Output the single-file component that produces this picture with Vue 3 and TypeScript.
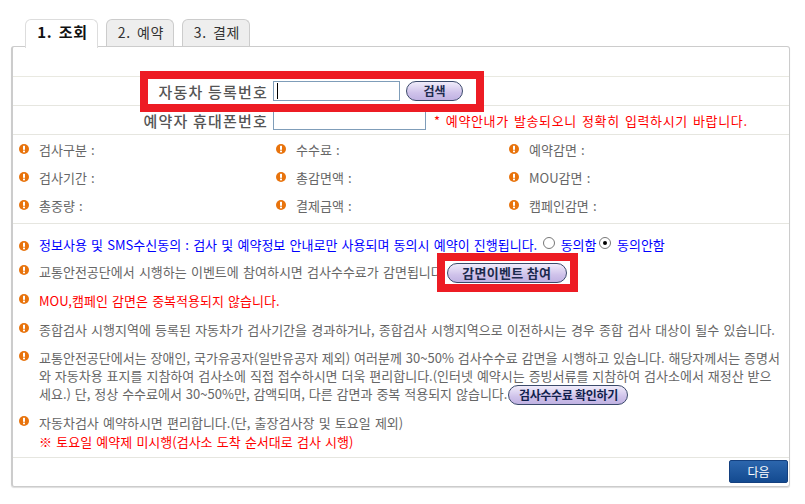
<script setup lang="ts">
interface Field {
  label: string;
}

const tabs = ['1. 조회', '2. 예약', '3. 결제']

const fields: Field[] = [
  { label: '검사구분 :' },
  { label: '수수료 :' },
  { label: '예약감면 :' },
  { label: '검사기간 :' },
  { label: '총감면액 :' },
  { label: 'MOU감면 :' },
  { label: '총중량 :' },
  { label: '결제금액 :' },
  { label: '캠페인감면 :' },
]
</script>

<template>
  <div class="page">
    <div class="tabs">
      <div v-for="(tab, i) in tabs" :key="tab" class="tab" :class="{ active: i === 0 }">{{ tab }}</div>
    </div>

    <div class="panel">
      <div class="blank"></div>

      <div class="form-row">
        <label class="form-label">자동차 등록번호</label>
        <span class="input focus"><i class="caret"></i></span>
        <button class="pill search">검색</button>
      </div>
      <div class="form-row">
        <label class="form-label">예약자 휴대폰번호</label>
        <span class="input phone"></span>
        <span class="form-note">* 예약안내가 발송되오니 정확히 입력하시기 바랍니다.</span>
      </div>

      <div class="fields">
        <div v-for="f in fields" :key="f.label" class="field">
          <svg class="ico" viewBox="0 0 10 10"><circle cx="5" cy="5" r="5" fill="#e8730c" /><rect x="4" y="1.8" width="2" height="4" fill="#fff" /><rect x="4" y="6.6" width="2" height="1.7" fill="#fff" /></svg>
          <span>{{ f.label }}</span>
        </div>
      </div>

      <div class="notices">
        <div class="notice n1 blue">
          <svg class="ico" viewBox="0 0 10 10"><circle cx="5" cy="5" r="5" fill="#e8730c" /><rect x="4" y="1.8" width="2" height="4" fill="#fff" /><rect x="4" y="6.6" width="2" height="1.7" fill="#fff" /></svg>
          <div class="notice-text">
            정보사용 및 SMS수신동의 : 검사 및 예약정보 안내로만 사용되며 동의시 예약이 진행됩니다.
            <span class="radio"></span> 동의함 <span class="radio on"></span> 동의안함
          </div>
        </div>
        <div class="notice n2">
          <svg class="ico" viewBox="0 0 10 10"><circle cx="5" cy="5" r="5" fill="#e8730c" /><rect x="4" y="1.8" width="2" height="4" fill="#fff" /><rect x="4" y="6.6" width="2" height="1.7" fill="#fff" /></svg>
          <div class="notice-text">
            교통안전공단에서 시행하는 이벤트에 참여하시면 검사수수료가 감면됩니다<button class="pill event">감면이벤트 참여</button>
          </div>
        </div>
        <div class="notice n3 red">
          <svg class="ico" viewBox="0 0 10 10"><circle cx="5" cy="5" r="5" fill="#e8730c" /><rect x="4" y="1.8" width="2" height="4" fill="#fff" /><rect x="4" y="6.6" width="2" height="1.7" fill="#fff" /></svg>
          <div class="notice-text">MOU,캠페인 감면은 중복적용되지 않습니다.</div>
        </div>
        <div class="notice n4">
          <svg class="ico" viewBox="0 0 10 10"><circle cx="5" cy="5" r="5" fill="#e8730c" /><rect x="4" y="1.8" width="2" height="4" fill="#fff" /><rect x="4" y="6.6" width="2" height="1.7" fill="#fff" /></svg>
          <div class="notice-text">종합검사 시행지역에 등록된 자동차가 검사기간을 경과하거나, 종합검사 시행지역으로 이전하시는 경우 종합 검사 대상이 될수 있습니다.</div>
        </div>
        <div class="notice n5">
          <svg class="ico" viewBox="0 0 10 10"><circle cx="5" cy="5" r="5" fill="#e8730c" /><rect x="4" y="1.8" width="2" height="4" fill="#fff" /><rect x="4" y="6.6" width="2" height="1.7" fill="#fff" /></svg>
          <div class="notice-text">
            <div>교통안전공단에서는 장애인, 국가유공자(일반유공자 제외) 여러분께 30~50% 검사수수료 감면을 시행하고 있습니다. 해당자께서는 증명서</div>
            <div>와 자동차용 표지를 지참하여 검사소에 직접 접수하시면 더욱 편리합니다.(인터넷 예약시는 증빙서류를 지참하여 검사소에서 재정산 받으</div>
            <div>세요.) 단, 정상 수수료에서 30~50%만, 감액되며, 다른 감면과 중복 적용되지 않습니다.<button class="pill fee">검사수수료 확인하기</button></div>
          </div>
        </div>
        <div class="notice n6">
          <svg class="ico" viewBox="0 0 10 10"><circle cx="5" cy="5" r="5" fill="#e8730c" /><rect x="4" y="1.8" width="2" height="4" fill="#fff" /><rect x="4" y="6.6" width="2" height="1.7" fill="#fff" /></svg>
          <div class="notice-text">
            <div>자동차검사 예약하시면 편리합니다.(단, 출장검사장 및 토요일 제외)</div>
            <div class="red sat">※ 토요일 예약제 미시행(검사소 도착 순서대로 검사 시행)</div>
          </div>
        </div>
      </div>

      <div class="footer">
        <button class="next">다음</button>
      </div>
    </div>

    <!-- 강조 표시 박스 -->
    <div class="mark mark-search"></div>
    <div class="mark mark-event"></div>
  </div>
</template>

<style scoped>
.page {
  position: relative;
  width: 805px;
  height: 504px;
  box-sizing: border-box;
  padding: 19px 0 0 11px;
  font-family: "Noto Sans CJK KR", "Liberation Sans", sans-serif;
  font-size: 13px;
  color: #666;
  overflow: hidden;
}

.tabs {
  display: flex;
  gap: 8px;
  padding-left: 14px;
  height: 27px;
  position: relative;
  z-index: 1;
}

.tab {
  width: 68px;
  height: 27px;
  box-sizing: border-box;
  padding-left: 2px;
  border: 1px solid #ccc;
  border-bottom: none;
  border-radius: 6px 6px 0 0;
  background: #eee;
  color: #333;
  font-size: 14px;
  line-height: 24px;
  text-align: center;
  letter-spacing: 0.8px;
  word-spacing: 2px;
}

.tab.active {
  width: 73px;
  height: 29px;
  background: #fff;
  color: #111;
  font-size: 15px;
  font-weight: 700;
  border-color: #ddd;
}

.panel {
  width: 779px;
  height: 441px;
  box-sizing: border-box;
  border: 1px solid #ccc;
  border-left-width: 2px;
  border-radius: 3px;
  box-shadow: 0 1px 1px #ddd;
}

.blank {
  height: 29px;
  border-bottom: 1px solid #e9e9e1;
}

.form-row {
  display: flex;
  align-items: center;
  height: 28px;
  border-bottom: 1px solid #e6e6e0;
}

.form-label {
  width: 255px;
  text-align: right;
  font-size: 15px;
  font-weight: 500;
  color: #555;
  letter-spacing: 1.2px;
  white-space: nowrap;
}

.input {
  display: flex;
  align-items: center;
  width: 127px;
  height: 20px;
  box-sizing: border-box;
  margin-left: 5px;
  border: 1px solid #7f9db9;
  background: #fff;
}

.input.phone {
  width: 153px;
}

.caret {
  width: 1px;
  height: 16px;
  margin-left: 3px;
  background: #000;
}

.form-note {
  margin-left: 8px;
  color: #f00;
  font-size: 13px;
  letter-spacing: 0.65px;
  word-spacing: 1.5px;
  white-space: nowrap;
}

.fields {
  display: grid;
  grid-template-columns: 257px 233px 1fr;
  grid-auto-rows: 28px;
  padding: 0 0 4px 6px;
  border-bottom: 1px solid #e6e6e0;
}

.field {
  display: flex;
  align-items: center;
  gap: 10px;
  white-space: nowrap;
  word-spacing: 1.3px;
}

.ico {
  flex: none;
  width: 10px;
  height: 10px;
}

.notices {
  height: 234px;
  padding-left: 6px;
  border-bottom: 1px solid #e6e6e0;
  box-sizing: border-box;
}

.notice {
  display: flex;
  gap: 10px;
  line-height: 18px;
  word-spacing: 1.3px;
}

.notice .ico {
  margin-top: 2px;
}

.notice.n1 .ico {
  margin-top: 5px;
}

.notice-text {
  white-space: nowrap;
}

.n1 { padding-top: 12px; height: 16px; }
.n2 { padding-top: 11px; height: 19px; }
.n3 { padding-top: 10px; height: 19px; }
.n4 { padding-top: 10px; height: 19px; }
.n5 { padding-top: 9px; height: 54px; word-spacing: 1px; }
.n6 { padding-top: 11px; height: 36px; }

.blue { color: #00f; }
.red { color: #f00; }
.sat { line-height: 20px; }

.radio {
  display: inline-block;
  width: 12px;
  height: 12px;
  box-sizing: border-box;
  margin: 0 1px 0 2px;
  border: 1px solid #777;
  border-radius: 50%;
  background: #fff;
  vertical-align: 1px;
  position: relative;
}

.radio.on {
  margin: 0 2px 0 -2px;
}

.radio.on::after {
  content: "";
  position: absolute;
  left: 3px;
  top: 3px;
  width: 4px;
  height: 4px;
  border-radius: 50%;
  background: #000;
}

.pill {
  height: 20px;
  padding: 0;
  border: 1px solid #3b4a6b;
  border-radius: 10px;
  background: linear-gradient(#f0ecfa, #cfc2ea 60%, #c0b2e2);
  color: #1c2a4d;
  font-family: inherit;
  font-size: 12px;
  font-weight: 700;
  line-height: 18px;
  vertical-align: middle;
}

.search {
  width: 57px;
  margin-left: 6px;
}

.event {
  width: 120px;
  margin-left: 4px;
  font-size: 13px;
  letter-spacing: 0.3px;
}

.fee {
  width: 120px;
  margin-left: 1px;
  letter-spacing: -0.3px;
  color: #111f4d;
}

.footer {
  display: flex;
  justify-content: flex-end;
  padding: 2px 1px 0 0;
}

.next {
  width: 59px;
  height: 23px;
  padding: 0;
  border: 1px solid #14407f;
  border-radius: 2px;
  background: linear-gradient(#2c66ad, #134a90);
  color: #fff;
  font-family: inherit;
  font-size: 12px;
}

.mark {
  position: absolute;
  box-sizing: border-box;
  border: 8px solid #ed1c24;
  pointer-events: none;
}

.mark-search {
  left: 140px;
  top: 71px;
  width: 344px;
  height: 41px;
}

.mark-event {
  left: 437px;
  top: 253px;
  width: 141px;
  height: 39px;
}
</style>

<style>
html, body {
  margin: 0;
  background: #fff;
}
</style>
